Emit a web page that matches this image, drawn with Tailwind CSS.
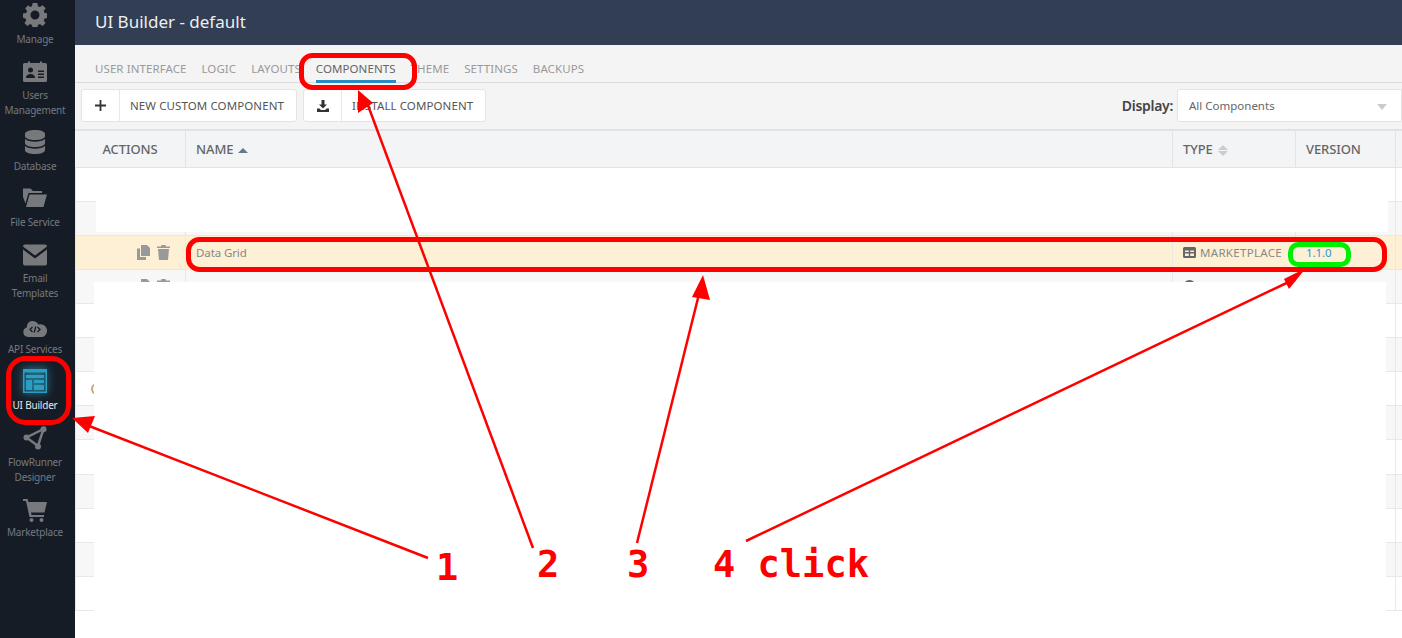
<!DOCTYPE html>
<html>
<head>
<meta charset="utf-8">
<script src="https://cdn.jsdelivr.net/npm/@tailwindcss/browser@4"></script>
</head>
<body class="m-0 overflow-hidden bg-white">
<div class="relative flex h-[638px] w-[1402px] overflow-hidden font-['Noto_Sans',sans-serif]">

  <!-- sidebar -->
  <aside class="flex h-full w-[75px] shrink-0 flex-col items-center bg-[#161c26] pr-[5px] text-center text-[10px] leading-[15px] tracking-[-0.2px] text-[#747980]">
    <div class="mt-[3px] flex flex-col items-center">
      <svg class="h-6 w-6 fill-[#77797c]" viewBox="0 0 24 24"><path fill-rule="evenodd" d="M9.6 0h4.8l.5 3.2 2 .9L19.600 2.200l3 3-1.900 2.700.9 2 3.200.5v4.400l-3.200.6-.9 2 1.900 2.600-3 3-2.700-1.900-2 .9-.5 3.200H9.600l-.6-3.200-2-.9-2.600 1.900-3-3 1.900-2.600-.9-2L0 14.800v-4.400l3.200-.5.900-2-1.900-2.700 3-3L7 4.100l2-.9zM12 7.500a4.500 4.500 0 1 0 0 9 4.500 4.500 0 0 0 0-9z"/></svg>
      <span class="mt-[5px]">Manage</span>
    </div>
    <div class="mt-[13px] flex flex-col items-center">
      <svg class="h-6 w-6" viewBox="0 0 24 24"><path class="fill-[#77797c]" d="M1.500 3H5V1.500h2V3h10V1.500h2V3h3.500A1.500 1.500 0 0 1 24 4.500v16a1.500 1.500 0 0 1-1.500 1.500h-21A1.500 1.500 0 0 1 0 20.500v-16A1.500 1.500 0 0 1 1.500 3z"/><circle class="fill-[#161c26]" cx="7.500" cy="10" r="2.500"/><path class="fill-[#161c26]" d="M3 18c0-3 2-4 4.500-4s4.500 1 4.500 4zM15 10.500h6V12h-6zM15 13.500h6V15h-6zM15 16.500h6V18h-6z"/></svg>
      <span class="mt-[4px]">Users<br>Management</span>
    </div>
    <div class="mt-[12px] flex flex-col items-center">
      <svg class="h-6 w-6 fill-[#77797c]" viewBox="0 0 24 24"><path d="M2 4c0-2.500 4.500-4 10-4s10 1.500 10 4v2c0 2.500-4.500 4-10 4S2 8.500 2 6zM2 8.800C4 11 8 11.700 12 11.700s8-.7 10-2.900V13c0 2.500-4.500 4-10 4S2 15.500 2 13zM2 15.800C4 18 8 18.700 12 18.700s8-.7 10-2.900V20c0 2.500-4.500 4-10 4S2 22.500 2 20z"/></svg>
      <span class="mt-[5px]">Database</span>
    </div>
    <div class="mt-[12px] flex flex-col items-center">
      <svg class="h-6 w-6 fill-[#77797c]" viewBox="0 0 24 24"><path d="M0 2.500h7.500L10 5h9v2H5.500L2.500 17.500 0 11zM6.500 8.500H24L20.500 21H3z"/></svg>
      <span class="mt-[5px]">File Service</span>
    </div>
    <div class="mt-[13px] flex flex-col items-center">
      <svg class="h-6 w-6 fill-[#77797c]" viewBox="0 0 24 24"><path d="M2 1.500h20A2 2 0 0 1 24 3.500L12 12.500 0 3.500a2 2 0 0 1 2-2zM0 6.500l12 9 12-9V20.500a2 2 0 0 1-2 2H2a2 2 0 0 1-2-2z"/></svg>
      <span class="mt-[4px]">Email<br>Templates</span>
    </div>
    <div class="mt-[15px] flex flex-col items-center">
      <svg class="h-6 w-6" viewBox="0 0 24 24"><path class="fill-[#77797c]" d="M5 21a5 5 0 0 1-1-9.800 5.500 5.500 0 0 1 5-6.200 7 7 0 0 1 6.500 3.500A6.500 6.500 0 0 1 19.500 21z"/><path class="fill-none stroke-[#161c26]" stroke-width="1.300" d="M9.500 11 7 13.500 9.500 16M14.500 11 17 13.500 14.500 16M12.800 10.500l-1.600 6"/></svg>
      <span class="mt-[2px]">API Services</span>
    </div>
    <div class="mt-[12px] flex flex-col items-center text-[#e8e8e8]">
      <svg class="h-6 w-6 drop-shadow-[0_0_4px_#2ca5c9]" viewBox="0 0 24 24"><path fill-rule="evenodd" class="fill-[#2b9ec2]" d="M0 0h24v24H0zM1.500 3.500v19h21v-19zM3 6h18v3H3zM3 11h6v10H3zM11 11h10v3H11zM11 16h10v5H11z"/></svg>
      <span class="mt-[5px]">UI Builder</span>
    </div>
    <div class="mt-[13px] flex flex-col items-center">
      <svg class="h-6 w-6" viewBox="0 0 24 24"><path class="fill-none stroke-[#77797c]" stroke-width="2.500" d="M20.500 3 3.500 11.500 15 20z"/><circle class="fill-[#77797c]" cx="20.500" cy="3.200" r="3"/><circle class="fill-[#77797c]" cx="3.500" cy="11.500" r="3"/><circle class="fill-[#77797c]" cx="15" cy="20.500" r="3"/></svg>
      <span class="mt-[5px]">FlowRunner<br>Designer</span>
    </div>
    <div class="mt-[13px] flex flex-col items-center">
      <svg class="h-6 w-6 fill-[#77797c]" viewBox="0 0 24 24"><path d="M0 1h4.500L5.500 4H24l-2.500 10.500H8l.5 2.500H21v2H6.500L3 3H0z"/><circle cx="8.500" cy="22" r="2"/><circle cx="18.500" cy="22" r="2"/></svg>
      <span class="mt-[3px]">Marketplace</span>
    </div>
  </aside>

  <!-- main -->
  <main class="flex min-w-0 flex-1 flex-col">
    <header class="flex h-[45px] shrink-0 items-center bg-[#323e54] pb-[2px] pl-5 text-[17px] tracking-[0px] text-[#eceef1]">UI Builder - default</header>

    <nav class="flex h-[38px] shrink-0 items-end gap-[15px] border-b border-[#dcdcdc] bg-[#f4f4f4] pl-5 text-[11.5px] tracking-[0.08px] text-[#9a9a9a]">
      <span class="pb-[5px]">USER INTERFACE</span>
      <span class="pb-[5px]">LOGIC</span>
      <span class="pb-[5px]">LAYOUTS</span>
      <span class="-mb-px border-b-[3px] border-[#2a8ac4] pb-[3px] text-[#666]">COMPONENTS</span>
      <span class="pb-[5px]">THEME</span>
      <span class="pb-[5px]">SETTINGS</span>
      <span class="pb-[5px]">BACKUPS</span>
    </nav>

    <div class="flex h-[48px] shrink-0 items-center gap-[6px] border-b-2 border-[#e2e2e2] bg-[#f4f4f4] pb-px pl-[6px] text-[11.500px] tracking-[0.1px] text-[#555]">
      <div class="flex h-[33px] w-[216px] items-center rounded-[3px] border border-[#e4e4e4] bg-white">
        <span class="flex h-full w-[38px] items-center justify-center border-r border-[#e8e8e8]">
          <svg class="h-[11px] w-[11px] fill-[#333]" viewBox="0 0 11 11"><path d="M4.600 0h1.800v4.600H11v1.800H6.400V11H4.600V6.400H0V4.600h4.600z"/></svg>
        </span>
        <span class="pl-[10px]">NEW CUSTOM COMPONENT</span>
      </div>
      <div class="flex h-[33px] w-[183px] items-center rounded-[3px] border border-[#e4e4e4] bg-white">
        <span class="flex h-full w-[38px] items-center justify-center border-r border-[#e8e8e8]">
          <svg class="h-3 w-3 fill-[#333]" viewBox="0 0 12 12"><path d="M4.500 0h3v4.500H10L6 8.500 2 4.500h2.500zM0 8.500h2.500L4 10h4l1.500-1.500H12V12H0z"/></svg>
        </span>
        <span class="pl-[10px]">INSTALL COMPONENT</span>
      </div>
      <div class="ml-auto flex items-center">
        <span class="mr-[4px] text-[14px] font-semibold tracking-[-0.3px] text-[#444]">Display:</span>
        <div class="relative flex h-[33px] w-[225px] items-center rounded-l-[3px] border border-[#e4e4e4] bg-white pl-[11px] text-[11.500px] tracking-[0px] text-[#666]">
          All Components
          <span class="absolute left-[199px] top-[14px] h-0 w-0 border-x-[5px] border-t-[6px] border-x-transparent border-t-[#ccc]"></span>
        </div>
      </div>
    </div>

    <!-- table -->
    <div class="grid h-[37px] shrink-0 grid-cols-[111px_987px_123px_100px_1fr] border-b border-[#e4e4e4] bg-[#f3f4f6] text-[13px] font-medium tracking-[-0.1px] text-[#666]">
      <div class="flex items-center justify-center border-r border-[#e4e4e4] pt-[2px]">ACTIONS</div>
      <div class="flex items-center gap-[5px] border-r border-[#e4e4e4] pl-[10px] pt-[2px]">NAME <span class="h-0 w-0 border-x-[5px] border-b-[5px] border-x-transparent border-b-[#66788a]"></span></div>
      <div class="flex items-center gap-[5px] border-r border-[#e4e4e4] pl-[10px] pt-[2px]">TYPE
        <span class="flex flex-col gap-px"><span class="h-0 w-0 border-x-[5px] border-b-[5px] border-x-transparent border-b-[#ccc]"></span><span class="h-0 w-0 border-x-[5px] border-t-[5px] border-x-transparent border-t-[#ccc]"></span></span>
      </div>
      <div class="flex items-center border-r border-[#e4e4e4] pl-[10px] pt-[2px]">VERSION</div>
      <div></div>
    </div>

    <div class="flex flex-col border-l border-[#e6e6e6] text-[11.500px] tracking-[-0.1px] text-[#888]">
      <div class="grid h-[34px] grid-cols-[110px_987px_123px_100px_1fr] border-b border-[#e8e8e8] bg-white"><div class="border-r border-[#e8e8e8]"></div><div class="border-r border-[#e8e8e8]"></div><div class="border-r border-[#e8e8e8]"></div><div class="border-r border-[#e8e8e8]"></div><div></div></div>
      <div class="grid h-[34px] grid-cols-[110px_987px_123px_100px_1fr] border-b border-[#e8e8e8] bg-[#f7f7f7]"><div class="border-r border-[#e8e8e8]"></div><div class="border-r border-[#e8e8e8]"></div><div class="border-r border-[#e8e8e8]"></div><div class="border-r border-[#e8e8e8]"></div><div></div></div>
      <div class="grid h-[34px] grid-cols-[110px_987px_123px_100px_1fr] border-b border-[#e8e8e8] bg-[#fdf0d5]">
        <div class="flex items-center justify-end gap-[7px] border-r border-[#e8e8e8] pr-[15px]">
          <svg class="h-[15px] w-[13px] fill-[#999]" viewBox="0 0 13 15"><path d="M4 0h6l3 3v8H4zM0 3.500h3V12h6v3H0z"/></svg>
          <svg class="h-[15px] w-[13px] fill-[#999]" viewBox="0 0 13 15"><path d="M4.500 0h4l.5 1.500h4V3H0V1.500h4zM1 4h11l-1 11H2z"/></svg>
        </div>
        <div class="flex items-center border-r border-[#e8e8e8] pl-[10px]">Data Grid</div>
        <div class="flex items-center gap-[4px] border-r border-[#e8e8e8] pl-[10px]">
          <svg class="h-[13px] w-[13px] fill-[#666]" viewBox="0 0 13 13"><path fill-rule="evenodd" d="M1.500 1h10A1.500 1.500 0 0 1 13 2.500v8a1.500 1.500 0 0 1-1.500 1.500h-10A1.500 1.500 0 0 1 0 10.500v-8A1.500 1.500 0 0 1 1.500 1zM2 4.500V6h3.800V4.500zm5.200 0V6H11V4.500zM2 7.500V10h3.800V7.500zm5.200 0V10H11V7.500z"/></svg>
          <span class="tracking-[0.3px]">MARKETPLACE</span>
        </div>
        <div class="flex items-center border-r border-[#e8e8e8] pl-[10px] text-[#2f95d8]">1.1.0</div>
        <div></div>
      </div>
      <div class="grid h-[34px] grid-cols-[110px_987px_123px_100px_1fr] border-b border-[#e8e8e8] bg-[#f7f7f7]"><div class="flex items-center justify-end gap-[7px] border-r border-[#e8e8e8] pr-[15px]"><svg class="h-[15px] w-[13px] fill-[#999]" viewBox="0 0 13 15"><path d="M4 0h6l3 3v8H4zM0 3.500h3V12h6v3H0z"/></svg><svg class="h-[15px] w-[13px] fill-[#999]" viewBox="0 0 13 15"><path d="M4.500 0h4l.5 1.500h4V3H0V1.500h4zM1 4h11l-1 11H2z"/></svg></div><div class="border-r border-[#e8e8e8]"></div><div class="flex items-center border-r border-[#e8e8e8] pl-[10px]"><span class="h-[13px] w-[13px] rounded-full bg-[#666]"></span></div><div class="border-r border-[#e8e8e8]"></div><div></div></div>
      <div class="grid h-[34px] grid-cols-[110px_987px_123px_100px_1fr] border-b border-[#e8e8e8] bg-white"><div></div><div></div><div></div><div class="border-r border-[#e8e8e8]"></div><div></div></div>
      <div class="grid h-[34px] grid-cols-[110px_987px_123px_100px_1fr] border-b border-[#e8e8e8] bg-[#f7f7f7]"><div></div><div></div><div></div><div class="border-r border-[#e8e8e8]"></div><div></div></div>
      <div class="grid h-[34px] grid-cols-[110px_987px_123px_100px_1fr] border-b border-[#e8e8e8] bg-white"><div class="flex items-center pl-[15px]"><span class="h-3 w-3 rounded-full border-2 border-[#c9a27e]"></span></div><div></div><div></div><div class="border-r border-[#e8e8e8]"></div><div></div></div>
      <div class="grid h-[34px] grid-cols-[110px_987px_123px_100px_1fr] border-b border-[#e8e8e8] bg-[#f7f7f7]"><div></div><div></div><div></div><div class="border-r border-[#e8e8e8]"></div><div></div></div>
      <div class="grid h-[35px] grid-cols-[110px_987px_123px_100px_1fr] border-b border-[#e8e8e8] bg-white"><div></div><div></div><div></div><div class="border-r border-[#e8e8e8]"></div><div></div></div>
      <div class="grid h-[34px] grid-cols-[110px_987px_123px_100px_1fr] border-b border-[#e8e8e8] bg-[#f7f7f7]"><div></div><div></div><div></div><div class="border-r border-[#e8e8e8]"></div><div></div></div>
      <div class="grid h-[34px] grid-cols-[110px_987px_123px_100px_1fr] border-b border-[#e8e8e8] bg-white"><div></div><div></div><div></div><div class="border-r border-[#e8e8e8]"></div><div></div></div>
      <div class="grid h-[34px] grid-cols-[110px_987px_123px_100px_1fr] border-b border-[#e8e8e8] bg-[#f7f7f7]"><div></div><div></div><div></div><div class="border-r border-[#e8e8e8]"></div><div></div></div>
      <div class="grid h-[34px] grid-cols-[110px_987px_123px_100px_1fr] border-b border-[#e8e8e8] bg-white"><div></div><div></div><div></div><div class="border-r border-[#e8e8e8]"></div><div></div></div>
    </div>
  </main>

  <!-- white redaction patches painted over the table -->
  <div class="absolute left-[96px] top-[168px] h-[64px] w-[1292px] bg-white"></div>
  <div class="absolute left-[94px] top-[282px] h-[356px] w-[1292px] bg-white"></div>

  <!-- annotation overlay -->
  <svg class="absolute left-0 top-0 h-[638px] w-[1402px]" viewBox="0 0 1402 638">
    <g class="fill-none stroke-[#ff0000]" stroke-width="5">
      <rect x="8.500" y="358.500" width="60" height="64" rx="17"/>
      <rect x="301.500" y="55.500" width="113" height="32" rx="11"/>
      <rect x="188.500" y="239.500" width="1196" height="30" rx="11"/>
    </g>
    <rect class="fill-none stroke-[#00ee00]" stroke-width="5" x="1290.500" y="244.500" width="58" height="20" rx="8"/>
    <g class="fill-none stroke-[#ff0000]" stroke-width="2.500">
      <path d="M428 558 84 424"/>
      <path d="M533 548 366 100"/>
      <path d="M637 543 700 290"/>
      <path d="M746 541 1295 279"/>
    </g>
    <g class="fill-[#ff0000]">
      <path d="M72 418 95 416 88 433z"/>
      <path d="M358 90 358 113 373 103z"/>
      <path d="M703 275 692 297 710 300z"/>
      <path d="M1306 268 1284 279 1289 289z"/>
    </g>
  </svg>
  <div class="absolute left-[436px] top-[546px] font-['DejaVu_Sans_Mono',monospace] text-[37px] font-bold leading-[44px] text-[#ff0000]">1</div>
  <div class="absolute left-[537px] top-[543px] font-['DejaVu_Sans_Mono',monospace] text-[37px] font-bold leading-[44px] text-[#ff0000]">2</div>
  <div class="absolute left-[627px] top-[543px] font-['DejaVu_Sans_Mono',monospace] text-[37px] font-bold leading-[44px] text-[#ff0000]">3</div>
  <div class="absolute left-[713px] top-[543px] whitespace-pre font-['DejaVu_Sans_Mono',monospace] text-[37px] font-bold leading-[44px] text-[#ff0000]">4 click</div>
</div>
</body>
</html>
